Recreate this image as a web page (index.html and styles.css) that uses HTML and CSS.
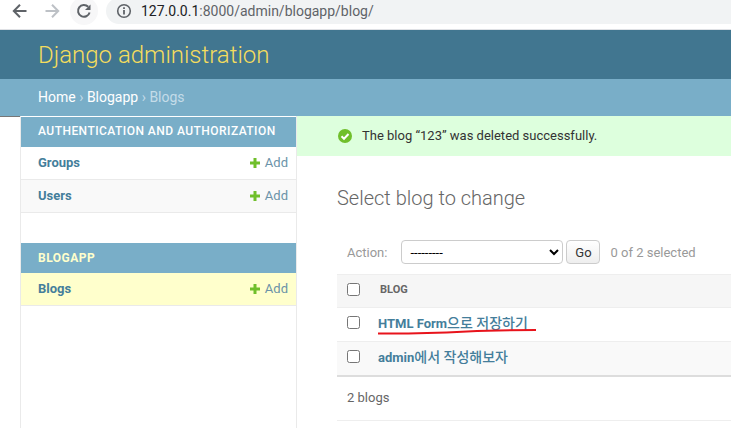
FILE: index.html
```html
<!DOCTYPE html>
<html lang="en">
<head>
<meta charset="utf-8">
<title>Select blog to change</title>
<link rel="stylesheet" href="styles.css">
</head>
<body>
<div class="chrome">
  <svg class="nav" width="18" height="18" viewBox="0 0 18 18"><path d="M15.500 9H3M9 2.700 2.800 9 9 15.300" fill="none" stroke="#5f6368" stroke-width="2"/></svg>
  <svg class="nav nav-fwd" width="18" height="18" viewBox="0 0 18 18"><path d="M2.500 9H15M9 2.700 15.200 9 9 15.300" fill="none" stroke="#bdc1c6" stroke-width="2"/></svg>
  <div class="reload"><svg width="18" height="18" viewBox="0 0 18 18"><path d="M14.600 10.500A5.900 5.900 0 1 1 13.200 4.800" fill="none" stroke="#5f6368" stroke-width="2"/><path d="M15.500 2.500V8H10Z" fill="#5f6368"/></svg></div>
  <div class="omnibox">
    <svg width="16" height="16" viewBox="0 0 16 16"><circle cx="8" cy="8" r="6.300" fill="none" stroke="#5f6368" stroke-width="1.600"/><path d="M7.100 7h1.800v4.600H7.100zM7.100 4.200h1.800V6H7.100z" fill="#5f6368"/></svg>
    <span class="url"><span class="host">127.0.0.1</span>:8000/admin/blogapp/blog/</span>
  </div>
</div>
<header class="site-header">Django administration</header>
<nav class="crumbs"><a>Home</a> <i>›</i> <a>Blogapp</a> <i>›</i> <span>Blogs</span></nav>
<div class="layout">
  <aside class="sidebar">
    <section class="module">
      <h2 class="cap">AUTHENTICATION AND AUTHORIZATION</h2>
      <div class="row"><a class="model">Groups</a><a class="add"><svg class="plus" width="10" height="10" viewBox="0 0 10 10"><path d="M3.500 0h3v3.500H10v3H6.500V10h-3V6.500H0v-3h3.500z" fill="#70bf2b"/></svg>Add</a></div>
      <div class="row alt"><a class="model">Users</a><a class="add"><svg class="plus" width="10" height="10" viewBox="0 0 10 10"><path d="M3.500 0h3v3.500H10v3H6.500V10h-3V6.500H0v-3h3.500z" fill="#70bf2b"/></svg>Add</a></div>
    </section>
    <section class="module">
      <h2 class="cap current">BLOGAPP</h2>
      <div class="row selected"><a class="model">Blogs</a><a class="add"><svg class="plus" width="10" height="10" viewBox="0 0 10 10"><path d="M3.500 0h3v3.500H10v3H6.500V10h-3V6.500H0v-3h3.500z" fill="#70bf2b"/></svg>Add</a></div>
    </section>
  </aside>
  <main class="main">
    <div class="message">
      <svg width="14" height="14" viewBox="0 0 14 14"><circle cx="7" cy="7" r="7" fill="#70bf2b"/><path d="M3.500 7.200 6 9.700l4.500-4.700" fill="none" stroke="#fff" stroke-width="2"/></svg>
      <span>The blog “123” was deleted successfully.</span>
    </div>
    <div class="content">
      <h1>Select blog to change</h1>
      <div class="actions">
        <label>Action:</label>
        <select class="select"><option>---------</option></select>
        <button class="go">Go</button>
        <span class="count">0 of 2 selected</span>
      </div>
      <div class="thead"><input type="checkbox" class="check"><span>BLOG</span></div>
      <div class="trow"><input type="checkbox" class="check"><a class="title">HTML Form<span class="ko">으로 저장하기</span><svg class="scribble" width="162" height="8" viewBox="0 0 162 8"><path d="M1 6.500C30 6.800 60 6 90 4.500 110 3.500 140 3 159 3" fill="none" stroke="#e8141c" stroke-width="2"/></svg></a></div>
      <div class="trow alt last"><input type="checkbox" class="check"><a class="title">admin<span class="ko">에서 작성해보자</span></a></div>
      <div class="paginator">2 blogs</div>
    </div>
  </main>
</div>
</body>
</html>
```
FILE: styles.css
```css
* { box-sizing: border-box; }
html, body { margin: 0; padding: 0; height: 428px; overflow: hidden; }
body { font-family: Roboto, "Noto Sans CJK KR", sans-serif; font-size: 13px; color: #333; background: #fff; }

.chrome { height: 30px; display: flex; align-items: center; background: #fff; border-bottom: 1px solid #dfe1e5; padding-bottom: 7px; overflow: hidden; }
.nav { margin-left: 11px; flex: none; }
.nav-fwd { margin-left: 14px; }
.reload { margin-left: 9px; width: 28px; height: 28px; border-radius: 50%; background: #f7f7f8; display: flex; align-items: center; justify-content: center; flex: none; }
.omnibox { margin-left: 8px; flex: 1; height: 26px; border-radius: 13px 0 0 13px; background: #f1f3f4; display: flex; align-items: center; padding-left: 10px; gap: 9px; }
.url { font-size: 14px; color: #5f6368; white-space: nowrap; }
.host { color: #202124; }

.site-header { height: 49px; background: #417690; color: #f5dd5d; font-size: 24px; font-weight: 300; padding: 10px 0 0 38px; line-height: 30px; }
.crumbs { height: 37px; background: #79aec8; color: #c4dce8; font-size: 14px; padding-left: 38px; line-height: 37px; white-space: nowrap; }
.crumbs a { color: #fff; }
.crumbs i { font-style: normal; color: #c4dce8; }

.layout { display: flex; align-items: stretch; height: 312px; }
.sidebar { width: 277px; margin-left: 20px; border-left: 1px solid #eaeaea; border-right: 1px solid #eaeaea; padding-top: 1px; flex: none; position: relative; }
.sidebar::before { content: ""; position: absolute; left: -21px; top: 0; width: 20px; height: 1px; background: #777; }
.module { margin-bottom: 30px; }
.cap { margin: 0; height: 30px; background: #79aec8; color: #fff; font-size: 12px; font-weight: 500; letter-spacing: .46px; line-height: 29px; padding-left: 17px; white-space: nowrap; }
.current { color: #ffc; font-weight: 700; font-size: 12px; line-height: 31px; letter-spacing: .5px; }
.row { height: 33px; display: flex; justify-content: space-between; align-items: center; padding: 0 8px 1px 17px; border-bottom: 1px solid #eaeaea; background: #fff; }
.row.alt { background: #f9f9f9; }
.row.selected { background: #ffc; }
.model { color: #447e9b; font-weight: 700; font-size: 13px; }
.add { color: #6b93a8; font-size: 13px; display: flex; align-items: center; }
.plus { margin-right: 5px; }

.main { flex: 1; min-width: 0; }
.message { height: 40px; background: #dfd; display: flex; align-items: center; padding: 0 0 1px 41px; gap: 10px; font-size: 13px; color: #333; }
.content { padding-left: 40px; }
h1 { margin: 0; padding-top: 30px; height: 80px; font-size: 20px; font-weight: 300; color: #666; line-height: 24px; }
.actions { height: 38px; display: flex; align-items: center; padding: 0 0 6px 10px; color: #999; font-size: 13px; }
.select { width: 162px; height: 24px; margin-left: 14px; border: 1px solid #ccc; border-radius: 4px; background: #fff; font-size: 13px; font-family: Roboto, sans-serif; color: #000; padding-left: 4px; }
.go { width: 34px; height: 24px; margin-left: 3px; border: 1px solid #ccc; border-radius: 4px; background: linear-gradient(#fff, #eee); font-size: 13px; font-family: Roboto, sans-serif; color: #333; padding: 0; }
.count { margin-left: 10px; }
.thead { height: 34px; background: #f6f6f6; border-top: 1px solid #eee; border-bottom: 1px solid #eee; padding-bottom: 3px; display: flex; align-items: center; font-size: 11px; font-weight: 700; color: #666; }
.thead span { margin-left: 20px; }
.check { appearance: auto; width: 13px; height: 13px; margin: 0 0 0 10px; flex: none; }
.trow { height: 34px; display: flex; align-items: center; border-bottom: 1px solid #eee; background: #fff; padding-bottom: 4px; }
.trow.alt { background: #f9f9f9; }
.trow.last { height: 35px; border-bottom: 2px solid #ddd; }
.title { margin: 0 0 2px 18px; color: #447e9b; font-weight: 700; font-size: 13px; position: relative; white-space: nowrap; }
.ko { font-size: 14px; font-weight: 500; }
.scribble { position: absolute; left: -1px; top: 15px; }
.paginator { height: 44px; border-bottom: 1px solid #eee; padding-left: 10px; line-height: 42px; color: #666; font-size: 13px; }
```
